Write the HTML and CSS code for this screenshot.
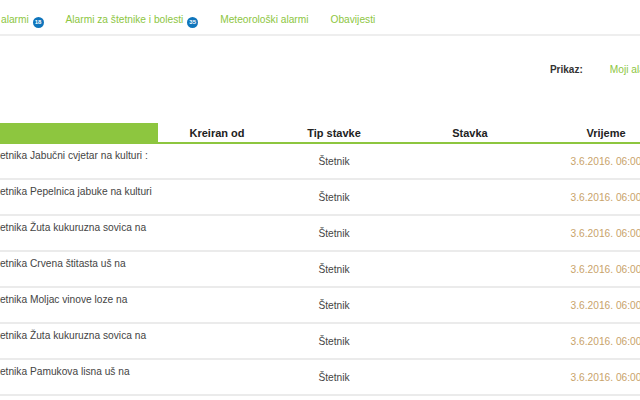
FILE: index.html
```html
<!DOCTYPE html>
<html lang="hr">
<head>
    <meta charset="UTF-8">
    <title>Alarmi</title>
    <link rel="stylesheet" href="styles.css">
</head>
<body>
    <div class="wrap">
        <!-- Tabs -->
        <ul class="tabs">
            <li><a href="#">Svi alarmi <span class="badge">18</span></a></li>
            <li><a href="#">Alarmi za štetnike i bolesti <span class="badge">35</span></a></li>
            <li><a href="#">Meteorološki alarmi</a></li>
            <li><a href="#">Obavijesti</a></li>
        </ul>

        <!-- Filter -->
        <div class="toolbar">
            <span class="label">Prikaz:</span>
            <a href="#" class="filter">Moji alarmi</a>
        </div>

        <table class="alarms">
            <thead>
                <tr>
                    <th class="col-name"></th>
                    <th>Kreiran od</th>
                    <th>Tip stavke</th>
                    <th>Stavka</th>
                    <th>Vrijeme</th>
                </tr>
            </thead>
            <tbody>
                <tr>
                    <td class="col-name">Alarm za štetnika Jabučni cvjetar na kulturi :</td>
                    <td></td><td>Štetnik</td><td></td><td class="time">3.6.2016. 06:00</td>
                </tr>
                <tr>
                    <td class="col-name">Alarm za štetnika Pepelnica jabuke na kulturi</td>
                    <td></td><td>Štetnik</td><td></td><td class="time">3.6.2016. 06:00</td>
                </tr>
                <tr>
                    <td class="col-name">Alarm za štetnika Žuta kukuruzna sovica na</td>
                    <td></td><td>Štetnik</td><td></td><td class="time">3.6.2016. 06:00</td>
                </tr>
                <tr>
                    <td class="col-name">Alarm za štetnika Crvena štitasta uš na</td>
                    <td></td><td>Štetnik</td><td></td><td class="time">3.6.2016. 06:00</td>
                </tr>
                <tr>
                    <td class="col-name">Alarm za štetnika Moljac vinove loze na</td>
                    <td></td><td>Štetnik</td><td></td><td class="time">3.6.2016. 06:00</td>
                </tr>
                <tr>
                    <td class="col-name">Alarm za štetnika Žuta kukuruzna sovica na</td>
                    <td></td><td>Štetnik</td><td></td><td class="time">3.6.2016. 06:00</td>
                </tr>
                <tr>
                    <td class="col-name">Alarm za štetnika Pamukova lisna uš na</td>
                    <td></td><td>Štetnik</td><td></td><td class="time">3.6.2016. 06:00</td>
                </tr>
            </tbody>
        </table>
    </div>
</body>
</html>
```

FILE: styles.css
```css
body {
    margin: 0;
    padding: 0;
    background: #fff;
    font-family: "Liberation Sans", Arial, sans-serif;
    font-size: 10.2px;
    color: #444;
    overflow: hidden;
}
.wrap {
    margin-left: -60px;
    width: 724px;
}
.tabs {
    list-style: none;
    margin: 0;
    padding: 13px 0 6px 33px;
    display: flex;
    border-bottom: 2px solid #eee;
}
.tabs li a {
    display: block;
    padding: 0 11px;
    line-height: 14px;
    color: #8dc63f;
    text-decoration: none;
}
.badge {
    display: inline-block;
    width: 11px;
    height: 11px;
    line-height: 11px;
    border-radius: 50%;
    background: #0f75bc;
    color: #fff;
    font-size: 6px;
    font-weight: bold;
    text-align: center;
    vertical-align: -1px;
    margin-left: 1px;
}
.toolbar {
    display: flex;
    justify-content: flex-end;
    align-items: center;
    gap: 27px;
    margin-top: 27px;
    padding-right: 5px;
    line-height: 14px;
}
.toolbar .label {
    font-size: 10px;
    font-weight: bold;
    color: #333;
}
.toolbar .filter {
    color: #8dc63f;
    text-decoration: none;
}
.alarms {
    width: 100%;
    margin-top: 46px;
    border-collapse: collapse;
    table-layout: fixed;
}
.alarms th {
    height: 19px;
    padding: 0;
    font-size: 11px;
    font-weight: bold;
    color: #222;
    text-align: center;
    border-bottom: 2px solid #8dc63f;
}
.alarms th.col-name {
    width: 218px;
    background: #8dc63f;
}
.alarms th:nth-child(2) { width: 118px; }
.alarms th:nth-child(3) { width: 116px; }
.alarms th:nth-child(4) { width: 156px; }
.alarms td {
    height: 34px;
    padding: 0;
    text-align: center;
    vertical-align: middle;
    border-bottom: 2px solid #ebebeb;
}
.alarms td.col-name {
    height: 29px;
    text-align: left;
    vertical-align: top;
    padding: 5px 0 0 9px;
    line-height: 14px;
    white-space: nowrap;
    overflow: hidden;
}
.alarms td.time {
    color: #c9a36b;
}
```
